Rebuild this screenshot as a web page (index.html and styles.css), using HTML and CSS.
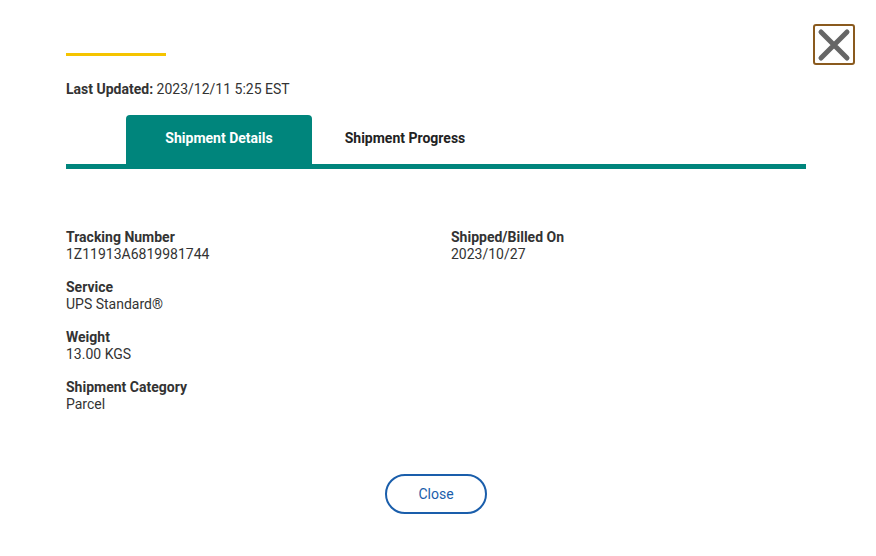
FILE: index.html
```html
<!DOCTYPE html>
<html lang="en">
  <head>
    <meta charset="UTF-8" />
    <meta name="viewport" content="width=device-width, initial-scale=1.0" />
    <title>Shipment Details</title>
    <link rel="stylesheet" href="styles.css">
  </head>
  <body>
    <div class="modal">
      <button class="close-x" aria-label="Close">
        <svg width="34" height="34" viewBox="0 0 34 34">
          <path d="M4 4 L30 30 M30 4 L4 30" stroke="#666" stroke-width="5" stroke-linecap="round" />
        </svg>
      </button>

      <div class="accent"></div>
      <p class="updated"><b>Last Updated:</b> 2023/12/11 5:25 EST</p>

      <div class="tabs">
        <div class="tab active">Shipment Details</div>
        <div class="tab">Shipment Progress</div>
      </div>

      <div class="details">
        <div class="col">
          <div class="field">
            <div class="label">Tracking Number</div>
            <div class="value">1Z11913A6819981744</div>
          </div>
          <div class="field">
            <div class="label">Service</div>
            <div class="value">UPS Standard®</div>
          </div>
          <div class="field">
            <div class="label">Weight</div>
            <div class="value">13.00 KGS</div>
          </div>
          <div class="field">
            <div class="label">Shipment Category</div>
            <div class="value">Parcel</div>
          </div>
        </div>
        <div class="col">
          <div class="field">
            <div class="label">Shipped/Billed On</div>
            <div class="value">2023/10/27</div>
          </div>
        </div>
      </div>

      <div class="footer">
        <button class="close-btn">Close</button>
      </div>
    </div>
  </body>
</html>
```

FILE: styles.css
```css
body {
  margin: 0;
  font-family: Roboto, "Liberation Sans", sans-serif;
  color: #333;
  background: #fff;
}

.modal {
  position: relative;
  width: 740px;
  padding: 53px 70px 0 66px;
}

.close-x {
  position: absolute;
  top: 24px;
  left: 813px;
  width: 42px;
  height: 41px;
  padding: 0;
  border: 2px solid #8a5a1e;
  border-radius: 3px;
  background: #fff;
  display: flex;
  align-items: center;
  justify-content: center;
  cursor: pointer;
}

.accent {
  width: 100px;
  height: 3px;
  background: #f5c400;
}

.updated {
  margin: 25px 0 0;
  font-size: 14px;
  line-height: 17px;
}

.updated b {
  font-weight: 700;
}

.tabs {
  display: flex;
  margin-top: 17px;
  padding-left: 60px;
  border-bottom: 5px solid #00857c;
}

.tab {
  width: 186px;
  height: 49px;
  padding-bottom: 3px;
  box-sizing: border-box;
  display: flex;
  align-items: center;
  justify-content: center;
  font-size: 14px;
  font-weight: 700;
  color: #222;
  border-radius: 4px 4px 0 0;
}

.tab.active {
  background: #00857c;
  color: #fff;
}

.details {
  display: grid;
  grid-template-columns: 385px 1fr;
  margin-top: 60px;
}

.field {
  margin-bottom: 16px;
  font-size: 14px;
  line-height: 17px;
}

.label {
  font-weight: 700;
}

.footer {
  display: flex;
  justify-content: center;
  margin-top: 45px;
}

.close-btn {
  width: 102px;
  height: 40px;
  border: 2px solid #1a5eab;
  border-radius: 20px;
  background: #fff;
  color: #1a5eab;
  font-family: Roboto, "Liberation Sans", sans-serif;
  font-size: 14px;
  cursor: pointer;
}
```
